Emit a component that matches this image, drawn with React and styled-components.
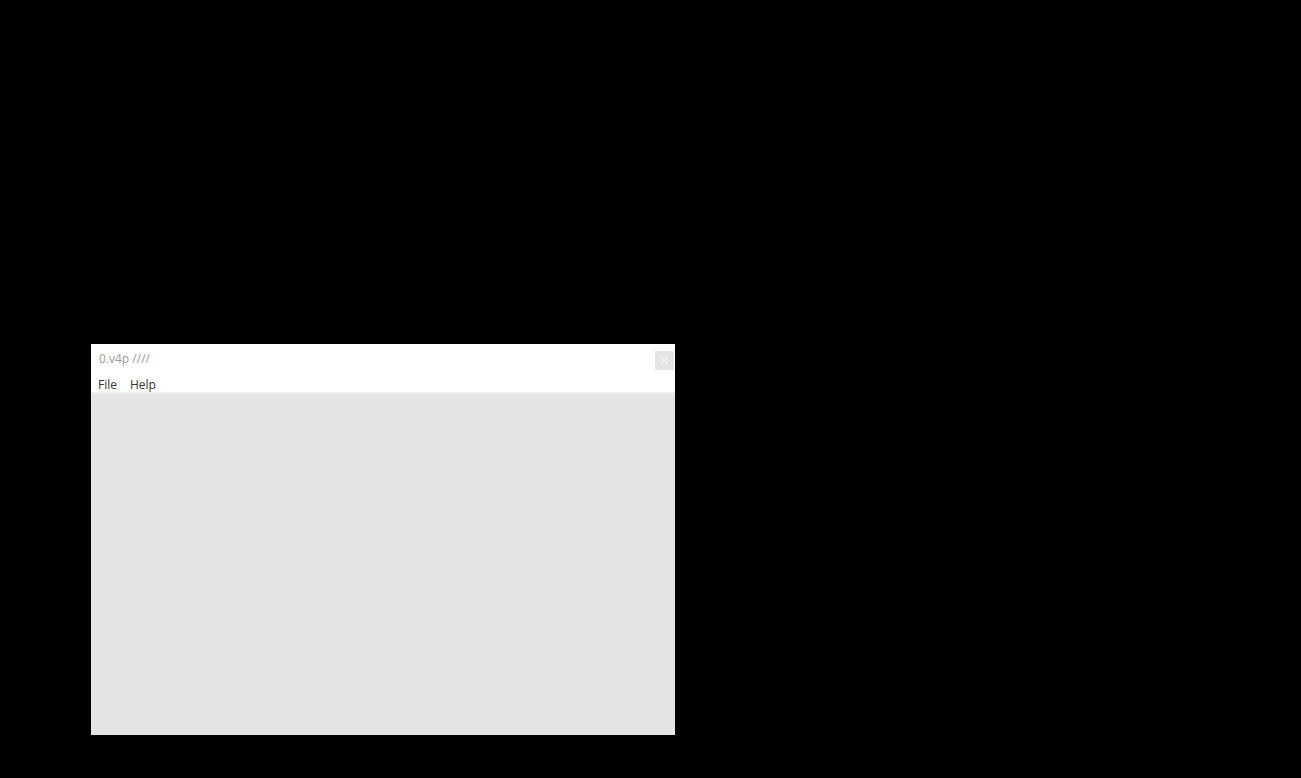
import React from "react";
import styled, {createGlobalStyle} from "styled-components";

const GlobalStyle = createGlobalStyle`
  html, body {
    margin: 0;
    padding: 0;
    background: #000;
    height: 100%;
  }
  #root {
    height: 100%;
  }
`;

const Desktop = styled.div`
  position: relative;
  width: 1301px;
  height: 778px;
  background: #000;
  overflow: hidden;
  font-family: "Open Sans", "Noto Sans", sans-serif;
`;

const Window = styled.div`
  position: absolute;
  left: ${p => p.x}px;
  top: ${p => p.y}px;
  width: ${p => p.w}px;
  height: ${p => p.h}px;
  display: flex;
  flex-direction: column;
  background: #fff;
`;

const TitleBar = styled.div`
  height: 30px;
  display: flex;
  align-items: flex-start;
  justify-content: space-between;
  padding: 0 1px 0 8px;
`;

const Title = styled.div`
  margin-top: 7px;
  font-size: 12px;
  line-height: 16px;
  color: #9a9a9a;
`;

const CloseButton = styled.button`
  margin-top: 7px;
  width: 19px;
  height: 19px;
  padding: 0;
  border: none;
  background: #e4e4e4;
  color: #f4f4f4;
  display: flex;
  align-items: center;
  justify-content: center;
  cursor: pointer;
`;

const MenuBar = styled.ul`
  display: flex;
  gap: 13px;
  margin: 0;
  padding: 2px 0 0 7px;
  list-style: none;
  height: 16px;
  border-bottom: 1px solid #efefef;
  box-sizing: content-box;
`;

const MenuItem = styled.li`
  font-size: 12px;
  line-height: 18px;
  color: #333;
  cursor: default;
`;

const Content = styled.div`
  flex: 1;
  background: #e4e4e4;
  border-top: 1px solid #f0f0f0;
`;

const App = () => {
    return (
        <>
            <GlobalStyle/>
            <Desktop>
                <Window x={91} y={344} w={584} h={391}>
                    <TitleBar>
                        <Title>0.v4p ////</Title>
                        <CloseButton aria-label="close">
                            <svg width="7" height="7" viewBox="0 0 7 7">
                                <path d="M0.5 0.5 L6.5 6.5 M6.5 0.5 L0.5 6.5" stroke="currentColor" strokeWidth="1.4"/>
                            </svg>
                        </CloseButton>
                    </TitleBar>
                    <MenuBar>
                        <MenuItem>File</MenuItem>
                        <MenuItem>Help</MenuItem>
                    </MenuBar>
                    <Content/>
                </Window>
            </Desktop>
        </>
    );
};

export default App;
